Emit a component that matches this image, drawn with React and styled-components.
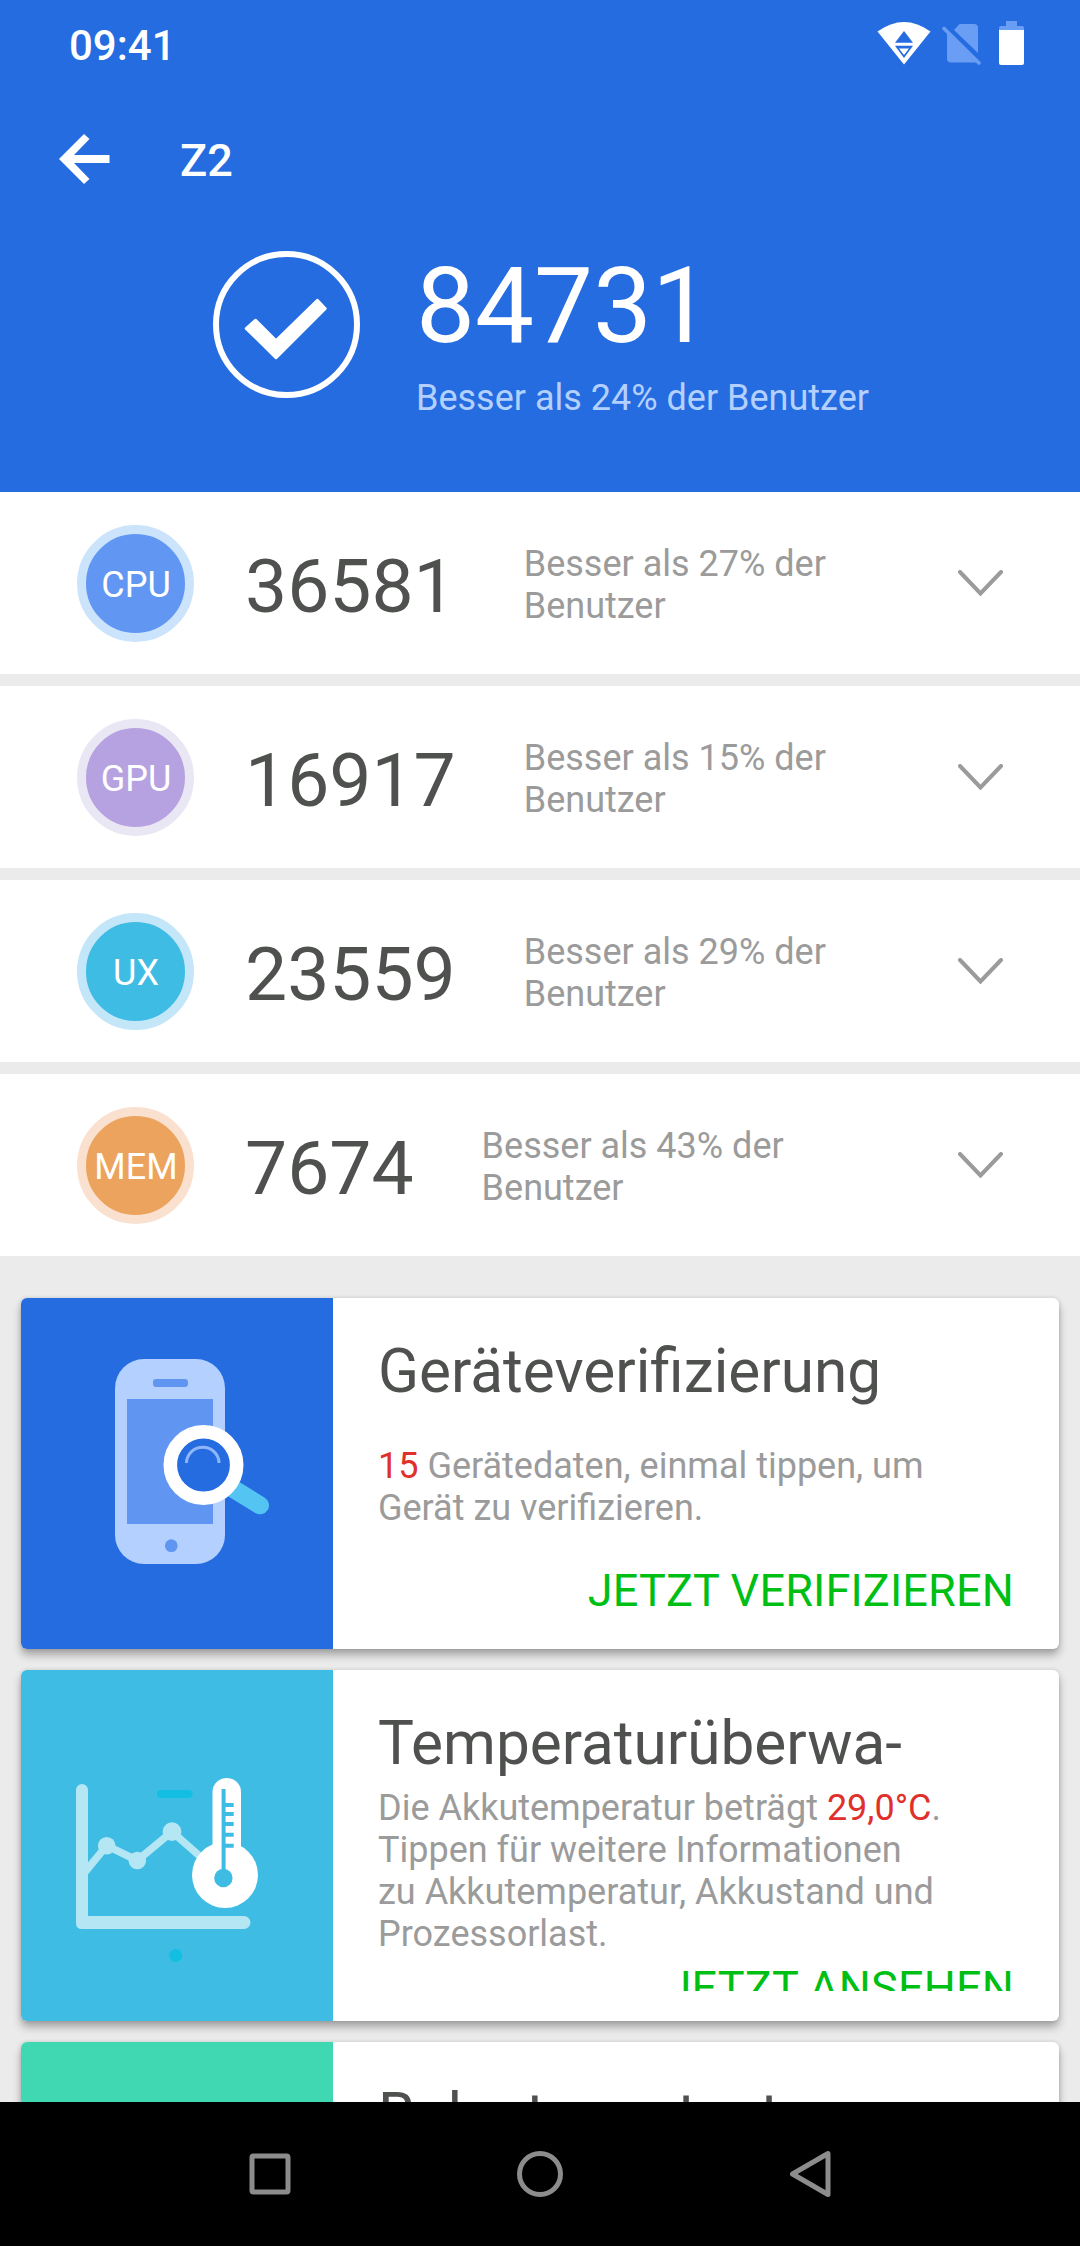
import styled, { createGlobalStyle } from 'styled-components';

const scores = [
  { label: 'CPU', value: '36581', percent: 27, color: '#6197f3', ring: '#cce4fb' },
  { label: 'GPU', value: '16917', percent: 15, color: '#b6a2e0', ring: '#eae7f5' },
  { label: 'UX', value: '23559', percent: 29, color: '#3ebce4', ring: '#c3e6f8' },
  { label: 'MEM', value: '7674', percent: 43, color: '#eca35d', ring: '#fae1cf' },
];

const WifiIcon = () => (
  <svg width="54" height="44" viewBox="0 0 54 44">
    <path d="M0.5 10.5 Q27 -8.5 53.5 10.5 L27 43.5 Z" fill="#fff" />
    <path d="M27 10 L36 21.8 H18 Z" fill="#256ce1" />
    <path d="M18 24.8 H36 L27 37 Z" fill="#256ce1" />
    <path d="M22 27.6 H32 L27 34 Z" fill="#fff" />
  </svg>
);

const NoSimIcon = () => (
  <svg width="40" height="44" viewBox="0 0 40 44">
    <path d="M5 12 L34.5 41.5 H9 Q5 41.5 5 37.5 Z" fill="#6a9df4" />
    <path d="M12 9 L17.5 3 H32 Q36 3 36 7 V32 Z" fill="#6a9df4" />
    <path d="M2 7.5 L37 42" stroke="#6a9df4" strokeWidth="3.6" strokeLinecap="round" />
  </svg>
);

const BatteryIcon = () => (
  <svg width="25" height="44" viewBox="0 0 25 44">
    <path d="M7 0 H18 V5 H23 Q25 5 25 7 V9 H0 V7 Q0 5 2 5 H7 Z" fill="#6a9df4" />
    <path d="M0 9 H25 V42 Q25 44 23 44 H2 Q0 44 0 42 Z" fill="#fff" />
  </svg>
);

const BackIcon = () => (
  <svg width="51" height="50" viewBox="0 0 51 50">
    <path d="M0 25 L25 0 L30.5 5 L15 21 H50.5 V29 H15 L30.5 45 L25 50 Z" fill="#fff" />
  </svg>
);

const CheckIcon = () => (
  <svg width="83" height="62" viewBox="0 0 83 62">
    <path
      d="M11.5 22 L32 42.5 L73.5 2 L81.5 10.5 L32 60 L2 30.5 Z"
      fill="#fff"
      stroke="#fff"
      strokeWidth="2.5"
      strokeLinejoin="round"
    />
  </svg>
);

const ChevronIcon = () => (
  <svg width="46" height="26" viewBox="0 0 46 26">
    <path d="M2 2 L22.5 23.5 L43 2" fill="none" stroke="#9b9b9b" strokeWidth="4" strokeLinecap="round" />
  </svg>
);

const PhoneArt = () => (
  <svg width="312" height="351" viewBox="0 0 312 351">
    <rect x="94" y="61" width="110" height="205" rx="29" fill="#b4d0ff" />
    <rect x="132" y="81" width="35" height="8" rx="3" fill="#6096f2" />
    <rect x="106" y="101" width="86" height="125" fill="#6096f2" />
    <circle cx="150.3" cy="247.7" r="6.4" fill="#6096f2" />
    <path d="M206 187 L239 207.3" stroke="#54c4f3" strokeWidth="18" strokeLinecap="round" />
    <circle cx="182.5" cy="167" r="33.2" fill="#256ce1" stroke="#fff" strokeWidth="13.6" />
    <path d="M165.5 165 A16 15.5 0 0 1 198 165" fill="none" stroke="#8fb6f8" strokeWidth="3" />
  </svg>
);

const TemperatureArt = () => (
  <svg width="312" height="351" viewBox="0 0 312 351">
    <rect x="136" y="120" width="35.5" height="8" rx="4" fill="#12bfe2" />
    <circle cx="154.7" cy="285.5" r="6.5" fill="#12bfe2" />
    <g fill="#b4e6f3">
      <path d="M55 120 A6 6 0 0 1 67 120 V246 H223 A6.5 6.5 0 0 1 223 259 H61 Q55 259 55 253 Z" />
      <circle cx="85.7" cy="175.7" r="8.8" />
      <circle cx="116.3" cy="190.5" r="8.8" />
      <circle cx="151" cy="161.7" r="9.4" />
    </g>
    <path d="M64 202 L85.7 175.7 L116.3 190.5 L151 161.7 L182 189" fill="none" stroke="#b4e6f3" strokeWidth="7.5" />
    <path d="M191.5 122 A14.2 14 0 0 1 220 122 V210 H191.5 Z" fill="#fff" />
    <circle cx="204" cy="205" r="33" fill="#fff" />
    <path
      d="M202.6 119 V204 M204 135 H212.7 M204 144 H212.7 M204 154 H212.7 M204 164.7 H212.7 M204 175.7 H212.7"
      stroke="#3ebce4"
      strokeWidth="4"
    />
    <circle cx="202.4" cy="208" r="9.2" fill="#3ebce4" />
  </svg>
);

const App = () => {
  return (
    <Screen>
      <GlobalStyle />
      <Header>
        <StatusBar>
          <Clock>09:41</Clock>
          <StatusIcons>
            <WifiIcon />
            <NoSimIcon />
            <BatteryIcon />
          </StatusIcons>
        </StatusBar>
        <Toolbar>
          <BackIcon />
          <DeviceName>Z2</DeviceName>
        </Toolbar>
        <Summary>
          <CheckCircle>
            <CheckIcon />
          </CheckCircle>
          <div>
            <TotalScore>84731</TotalScore>
            <TotalNote>Besser als 24% der Benutzer</TotalNote>
          </div>
        </Summary>
      </Header>

      <ScoreList>
        {scores.map((score) => (
          <ScoreRow key={score.label}>
            <Badge $color={score.color} $ring={score.ring}>{score.label}</Badge>
            <ScoreValue>{score.value}</ScoreValue>
            <ScoreNote>{`Besser als ${score.percent}% der Benutzer`}</ScoreNote>
            <ChevronIcon />
          </ScoreRow>
        ))}
      </ScoreList>

      <CardList>
        <Card>
          <CardArt $color="#256ce1">
            <PhoneArt />
          </CardArt>
          <CardBody>
            <CardTitle>Geräteverifizierung</CardTitle>
            <CardText>
              <p><Red>15</Red> Gerätedaten, einmal tippen, um Gerät zu verifizieren.</p>
            </CardText>
            <CardAction>JETZT VERIFIZIEREN</CardAction>
          </CardBody>
        </Card>
        <Card>
          <CardArt $color="#3ebce4">
            <TemperatureArt />
          </CardArt>
          <CardBody>
            <CardTitle>Temperaturüberwa-</CardTitle>
            <CardText>
              <p>
                Die Akkutemperatur beträgt <Red>29,0°C</Red>.<br />
                Tippen für weitere Informationen<br />
                zu Akkutemperatur, Akkustand und Prozessorlast.
              </p>
            </CardText>
            <CardAction>JETZT ANSEHEN</CardAction>
          </CardBody>
        </Card>
        <Card>
          <CardArt $color="#40d8b2" />
          <CardBody>
            <CardTitle>Belastungstest</CardTitle>
          </CardBody>
        </Card>
      </CardList>

      <NavBar>
        <svg width="48" height="48" viewBox="0 0 48 48">
          <rect x="6" y="6" width="36" height="36" rx="1.5" />
        </svg>
        <svg width="48" height="48" viewBox="0 0 48 48">
          <circle cx="24" cy="24" r="20.5" />
        </svg>
        <svg width="48" height="48" viewBox="0 0 48 48">
          <path d="M42 3.5 V44.5 L6.5 24 Z" />
        </svg>
      </NavBar>
    </Screen>
  );
};

export default App;

const GlobalStyle = createGlobalStyle`
  * {
    box-sizing: border-box;
  }

  body {
    margin: 0;
    font-family: Roboto, 'Liberation Sans', sans-serif;
  }

  h1, h2, p {
    margin: 0;
    font-weight: 400;
  }

  svg {
    display: block;
    flex-shrink: 0;
  }
`;

const Screen = styled.div`
  display: flex;
  flex-direction: column;
  width: 1080px;
  height: 2246px;
  overflow: hidden;
  background: #ebebeb;
`;

const Header = styled.header`
  height: 492px;
  flex-shrink: 0;
  background: #256ce1;
  color: #fff;
`;

const StatusBar = styled.div`
  display: flex;
  justify-content: space-between;
  height: 87px;
  padding: 21px 56px 0 69px;
`;

const Clock = styled.span`
  font-size: 42px;
  font-weight: 500;
  line-height: 49px;
`;

const StatusIcons = styled.div`
  display: flex;
  align-items: flex-end;
  height: 44px;

  & > :nth-child(2) {
    margin: 0 17px 0 11px;
  }
`;

const Toolbar = styled.div`
  display: flex;
  align-items: center;
  height: 144px;
  padding-left: 59px;
  gap: 70px;
`;

const DeviceName = styled.h1`
  margin-top: 2px;
  font-size: 45px;
  font-weight: 500;
  line-height: 53px;
`;

const Summary = styled.div`
  display: flex;
  padding: 20px 0 0 212.5px;
  gap: 56.5px;
`;

const CheckCircle = styled.div`
  display: flex;
  align-items: center;
  justify-content: center;
  width: 147px;
  height: 147px;
  border: 6px solid #fff;
  border-radius: 50%;
  padding: 8px 1px 0 0;
`;

const TotalScore = styled.div`
  font-size: 105px;
  line-height: 123px;
  margin-top: -6px;
`;

const TotalNote = styled.p`
  margin-top: 9px;
  font-size: 36px;
  line-height: 42px;
  color: #b4d0ff;
`;

const ScoreList = styled.div`
  display: flex;
  flex-direction: column;
  flex-shrink: 0;
  gap: 12px;
`;

const ScoreRow = styled.div`
  display: flex;
  align-items: center;
  height: 182px;
  padding: 0 76px 0 77px;
  background: #fff;
`;

const Badge = styled.div`
  display: flex;
  align-items: center;
  justify-content: center;
  width: 117px;
  height: 117px;
  padding: 3px 0 0 1px;
  border: 9px solid ${(props) => props.$ring};
  border-radius: 50%;
  background: ${(props) => props.$color};
  color: #fff;
  font-size: 36px;
`;

const ScoreValue = styled.span`
  margin: 5px 68px 0 51px;
  font-size: 75px;
  line-height: 88px;
  color: #4f514f;
`;

const ScoreNote = styled.p`
  width: 320px;
  margin: 4px auto 0 0;
  font-size: 36px;
  line-height: 42px;
  color: #9b9b9b;
`;

const CardList = styled.div`
  display: flex;
  flex-direction: column;
  flex: 1;
  min-height: 0;
  padding: 42px 21px 0;
  gap: 21px;
  overflow: hidden;
`;

const Card = styled.div`
  display: flex;
  flex-shrink: 0;
  height: 351px;
  border-radius: 6px;
  background: #fff;
  box-shadow: 0 6px 8px rgba(0, 0, 0, 0.3), 0 0 4px rgba(0, 0, 0, 0.12);
`;

const CardArt = styled.div`
  width: 312px;
  border-radius: 6px 0 0 6px;
  background: ${(props) => props.$color};
`;

const CardBody = styled.div`
  display: flex;
  flex-direction: column;
  width: 636px;
  height: 291px;
  margin: 30px 45px;
  padding-top: 9px;
  overflow: hidden;
`;

const CardTitle = styled.h2`
  flex-shrink: 0;
  font-size: 60.3px;
  line-height: 70px;
  color: #4f514f;
`;

const CardText = styled.div`
  display: flex;
  align-items: center;
  flex-shrink: 0;
  min-height: 143px;
  margin: 8px 0 6px;
  font-size: 36px;
  line-height: 42px;
  color: #9b9b9b;
`;

const Red = styled.span`
  color: #e0302c;
`;

const CardAction = styled.span`
  flex-shrink: 0;
  align-self: flex-end;
  font-size: 45px;
  line-height: 53px;
  letter-spacing: 0.16px;
  color: #00bf14;
`;

const NavBar = styled.nav`
  display: flex;
  align-items: center;
  justify-content: space-between;
  flex-shrink: 0;
  height: 144px;
  padding: 0 246px;
  background: #000;

  svg {
    fill: none;
    stroke: #8c8c8c;
    stroke-width: 5;
    stroke-linejoin: round;
  }
`;
